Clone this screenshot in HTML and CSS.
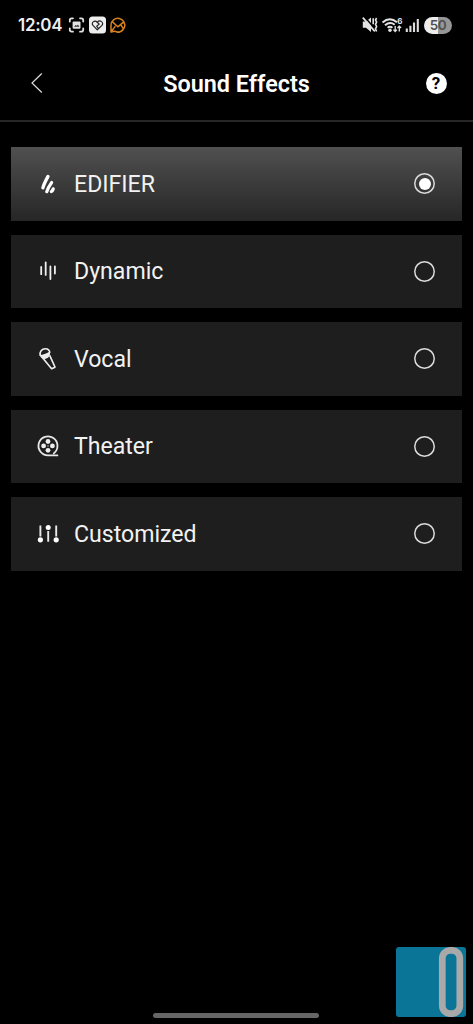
FILE: index.html
```html
<!DOCTYPE html>
<html lang="en">
<head>
<meta charset="utf-8">
<title>Sound Effects</title>
<link rel="stylesheet" href="styles.css">
</head>
<body>
<div class="screen">
  <div class="status">
    <span class="time">12:04</span>
    <svg class="status-left" width="60" height="20" viewBox="0 0 60 20" fill="none">
      <g stroke="#e2e2e2" stroke-width="1.8" stroke-linecap="round" stroke-linejoin="round">
        <path d="M1.8 6.5V5.2Q1.8 3.3 3.7 3.3H5M12 3.3h1.3q1.9 0 1.9 1.9v1.3M15.2 13.5v1.3q0 1.9-1.9 1.9H12M5 16.7H3.7q-1.9 0-1.9-1.9v-1.3"/>
      </g>
      <path d="M5.6 6.5h5.9q1 0 1 1v5.2q0 1-1 1H5.6q-1 0-1-1V7.5q0-1 1-1Z" fill="#e2e2e2"/>
      <path d="M6.2 11.4l1.5-1.4 1 .7 1.2-1 1.2 1.2v.9H6.2Z" fill="#333"/>
      <rect x="21" y="1.5" width="17" height="17" rx="3.5" fill="#eee"/>
      <path d="M29.3 14.8L25 10.4C22.7 7.8 26.5 4.7 29.2 7.2C32 4.4 36.3 7.4 34 10.4L29.3 14.8ZM29.2 7.2l2 1.9-2.5 2.2 1.5 1.8" stroke="#222" stroke-width="1.2" stroke-linejoin="round"/>
      <path d="M43 17V10A6.9 6.9 0 1 1 46.5 16.2L43 17L47 11.6M44.2 6.6L49.8 11.8L55.8 6.8M52.8 9.6l2.6 4.2" stroke="#d7821f" stroke-width="1.5" stroke-linejoin="round" stroke-linecap="round"/>
    </svg>
    <svg class="status-right" width="60" height="20" viewBox="0 0 60 20" fill="none">
      <path d="M.8 6.6h3.2l5-4v14.4L4 12.8H.8Z" fill="#e4e4e4"/>
      <path d="M2.2 1.4L11 11.6" stroke="#000" stroke-width="1.6"/>
      <path d="M.8 2.6L12.8 16.4" stroke="#e4e4e4" stroke-width="1.7"/>
      <path d="M11.2 3.2v6M14.6 3l-1.1 2 1.1 2-1.1 2.3 1.1 2.2-1.1 2.3 1.1 2.7" stroke="#e4e4e4" stroke-width="1.6"/>
      <g stroke="#e4e4e4" stroke-width="2">
        <path d="M20.5 7.4Q27.8 1.2 35 7.2M23 10.2Q28 6.1 32.7 9.7M25.6 12.8Q28 10.8 30.4 12.8"/>
      </g>
      <circle cx="28" cy="15.2" r="1.7" fill="#e4e4e4"/>
      <path d="M33.2 11v5.4M31.4 14.6l1.8 1.9 1.8-1.9M37.3 16.6v-5.4M35.5 13l1.8-1.9 1.8 1.9" stroke="#e4e4e4" stroke-width="1.3"/>
      <text x="35.2" y="8.6" class="wifi-number">6</text>
      <path d="M44.8 13.6V17M48.4 10.7V17M52 7.4V17M55.8 4V17" stroke="#dedede" stroke-width="2.1"/>
    </svg>
    <span class="battery">50</span>
  </div>

  <div class="header">
    <svg class="back" width="14" height="22" viewBox="0 0 14 22"><path d="M11.8 1.5L2 11l9.8 9.5" fill="none" stroke="#ddd" stroke-width="1.2"/></svg>
    <h1 class="title">Sound Effects</h1>
    <span class="help">?</span>
  </div>

  <div class="list">
    <div class="row row-selected">
      <svg class="icon" width="24" height="24" viewBox="0 0 24 24"><g fill="none" stroke="#fff" stroke-width="3.3" stroke-linecap="round"><path d="M6.9 15.9Q7.6 12.6 12 4.4M10.8 19.6Q12 15.6 15.6 10.6M15.4 19.5Q16.6 18.7 17.2 16.9"/></g></svg>
      <span class="label">EDIFIER</span><span class="radio radio-on"></span>
    </div>
    <div class="row">
      <svg class="icon" width="24" height="24" viewBox="0 0 24 24"><path d="M5.2 8v7.2M9.7 3.3v12.6M14.4 7.5V20M18.9 7.3v7.3" fill="none" stroke="#eee" stroke-width="1.8" stroke-linecap="round"/></svg>
      <span class="label">Dynamic</span><span class="radio"></span>
    </div>
    <div class="row">
      <svg class="icon" width="24" height="24" viewBox="0 0 24 24"><g fill="none" stroke="#eee" stroke-width="1.6" stroke-linejoin="round"><path d="M4.2 8.8C3.2 5 5.8 1.6 9.5 1.7 12.1 1.8 13.6 3.4 13.9 5.8"/><path d="M6.7 11L15.6 21.8 19 20.2 13.7 8.4"/></g><path d="M3.8 8C6.8 8 10.6 6.6 13.6 4.6 15.2 7.8 12.6 11.6 9 12 6.4 12.2 4.3 10.6 3.8 8Z" fill="#eee"/></svg>
      <span class="label">Vocal</span><span class="radio"></span>
    </div>
    <div class="row">
      <svg class="icon" width="24" height="24" viewBox="0 0 24 24"><path d="M21.4 21.4H12A9.5 9.5 0 1 1 17.8 19.4" fill="none" stroke="#e8e8e8" stroke-width="1.8" stroke-linecap="round"/><g fill="#eee"><circle cx="12" cy="7.5" r="2.4"/><circle cx="7.6" cy="11.9" r="2.4"/><circle cx="16.4" cy="11.9" r="2.4"/><circle cx="12" cy="16.3" r="2.4"/><circle cx="12" cy="11.9" r=".7"/></g></svg>
      <span class="label">Theater</span><span class="radio"></span>
    </div>
    <div class="row">
      <svg class="icon" width="24" height="24" viewBox="0 0 24 24"><path d="M4.4 3.5v11M12.2 9v10.8M20.2 3.5v11" fill="none" stroke="#e9e9e9" stroke-width="1.9"/><g fill="#fff"><circle cx="4.4" cy="17.8" r="2.6"/><circle cx="12.2" cy="5.6" r="2.5"/><circle cx="20.2" cy="17.8" r="2.6"/></g></svg>
      <span class="label">Customized</span><span class="radio"></span>
    </div>
  </div>

  <svg class="floating" width="71" height="70" viewBox="0 0 71 70"><rect width="70" height="70" rx="3" fill="#0b7598"/><rect x="46.3" y="3.3" width="17.5" height="63.4" rx="8" fill="#0b7598" stroke="#a9a9a9" stroke-width="6.7"/></svg>
  <div class="home-bar"></div>
</div>
</body>
</html>
```
FILE: styles.css
```css
* { box-sizing: border-box; }
body { margin: 0; background: #000; }
.screen {
  position: relative;
  display: flex;
  flex-direction: column;
  width: 473px;
  height: 1024px;
  overflow: hidden;
  background: #000;
  color: #fff;
  font-family: Roboto, "Liberation Sans", sans-serif;
}
.status {
  display: flex;
  align-items: center;
  height: 50px;
  padding: 0 21px 0 18px;
}
.time {
  width: 50px;
  font: 600 17px/20px Inter, Roboto, sans-serif;
  letter-spacing: -0.3px;
  color: #eee;
  white-space: nowrap;
}
.status-left { display: block; }
.status-right { display: block; margin-left: auto; }
.wifi-number { font: 700 8px Inter, sans-serif; fill: #e4e4e4; }
.battery {
  width: 28px;
  height: 17px;
  margin-left: 2px;
  border-radius: 9px;
  background: linear-gradient(90deg, #ededed 50%, #969696 50%);
  color: #505050;
  font: 600 13.5px/17px Inter, sans-serif;
  letter-spacing: -0.5px;
  text-align: center;
}
.header {
  display: grid;
  grid-template-columns: 60px 1fr 60px;
  align-items: center;
  height: 72px;
  padding-bottom: 4px;
  border-bottom: 2px solid #262626;
}
.back { margin-left: 30px; }
.title {
  margin: 0;
  font-size: 23.4px;
  line-height: 30px;
  font-weight: 600;
  text-align: center;
  padding-top: 2px;
}
.help {
  width: 21px;
  height: 21px;
  margin-left: 12.5px;
  border-radius: 50%;
  background: #fff;
  color: #000;
  font-size: 17px;
  font-weight: 700;
  line-height: 21px;
  text-align: center;
}
.list {
  display: flex;
  flex-direction: column;
  gap: 14px;
  padding: 25px 11px 0;
}
.row {
  display: flex;
  align-items: center;
  height: 73.5px;
  padding: 0 27px 0 25px;
  background: #1e1e1e;
}
.row-selected { background: linear-gradient(#505050, #262626); }
.label {
  margin-left: 14px;
  padding-top: 2px;
  font-size: 23.1px;
  line-height: 30px;
  color: #f2f2f2;
}
.radio {
  display: grid;
  place-items: center;
  width: 21px;
  height: 21px;
  margin-left: auto;
  border-radius: 50%;
  box-shadow: inset 0 0 0 1.5px #dcdcdc;
}
.radio-on::after {
  content: "";
  width: 12px;
  height: 12px;
  border-radius: 50%;
  background: #fff;
}
.floating { position: absolute; left: 396px; top: 947px; }
.home-bar {
  width: 166px;
  height: 5px;
  margin: auto auto 6px 153px;
  border-radius: 3px;
  background: #666;
}
```
